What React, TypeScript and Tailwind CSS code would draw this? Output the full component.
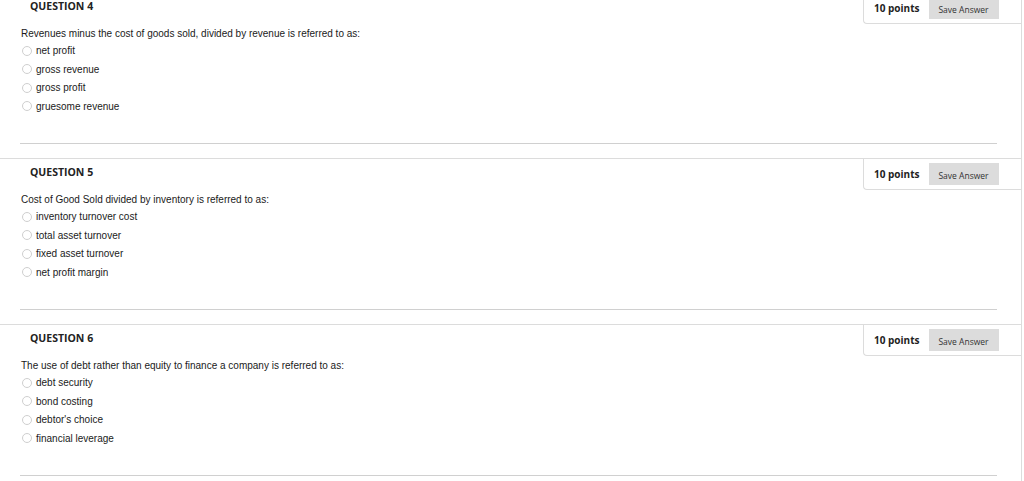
import React from "react";

type Q = { n: number; prompt: string; options: string[] };

const questions: Q[] = [
  {
    n: 4,
    prompt: "Revenues minus the cost of goods sold, divided by revenue is referred to as:",
    options: ["net profit", "gross revenue", "gross profit", "gruesome revenue"],
  },
  {
    n: 5,
    prompt: "Cost of Good Sold divided by inventory is referred to as:",
    options: ["inventory turnover cost", "total asset turnover", "fixed asset turnover", "net profit margin"],
  },
  {
    n: 6,
    prompt: "The use of debt rather than equity to finance a company is referred to as:",
    options: ["debt security", "bond costing", "debtor's choice", "financial leverage"],
  },
];

function Block({ q, first }: { q: Q; first: boolean }) {
  return (
    <div className={`border-t border-[#dcdcdc] ${first ? "-mt-[8px]" : ""}`}>
      <div className="flex h-[31px] justify-between">
        <div
          className="pl-[30px] text-[10.5px] font-bold leading-[26px] text-[#222]"
          style={{ fontFamily: '"Open Sans", sans-serif' }}
        >
          QUESTION {q.n}
        </div>
        <div className="flex h-[31px] w-[158px] items-center rounded-bl-[4px] border-b border-l border-[#dcdcdc]">
          <span
            className="pl-[10px] text-[10px] font-bold text-[#222]"
            style={{ fontFamily: '"Open Sans", sans-serif' }}
          >
            10 points
          </span>
          <span
            className="ml-[9px] flex h-[22px] w-[70px] items-center justify-center bg-[#dcdcdc] pt-[3px] text-[8.5px] leading-[10px] text-[#333]"
            style={{ fontFamily: '"Open Sans", sans-serif' }}
          >
            Save Answer
          </span>
        </div>
      </div>
      <div style={{ fontFamily: '"Liberation Sans", Arial, sans-serif' }}>
        <div className="mt-[3px] h-[14px] pl-[21px] text-[10px] leading-[14px] text-[#1a1a1a]">{q.prompt}</div>
        {q.options.map((o, i) => (
          <div key={o} className={`flex items-center pl-[22px] ${i % 2 === 0 ? "h-[19px]" : "h-[18px]"}`}>
            <span className="h-[10px] w-[10px] rounded-full border border-[#cfcfcf] bg-white" />
            <span className="pl-[4px] text-[10px] text-[#1a1a1a]">{o}</span>
          </div>
        ))}
      </div>
      <div className="ml-[20px] mt-[28px] w-[977px] border-b border-[#d0d0d0]" />
      <div className="h-[14px]" />
    </div>
  );
}

export default function App() {
  return (
    <div className="h-[481px] w-[1024px] overflow-hidden bg-white">
      <div className="w-[1022px] border-r border-[#dcdcdc] pb-[40px]">
        {questions.map((q, i) => (
          <Block key={q.n} q={q} first={i === 0} />
        ))}
      </div>
    </div>
  );
}
